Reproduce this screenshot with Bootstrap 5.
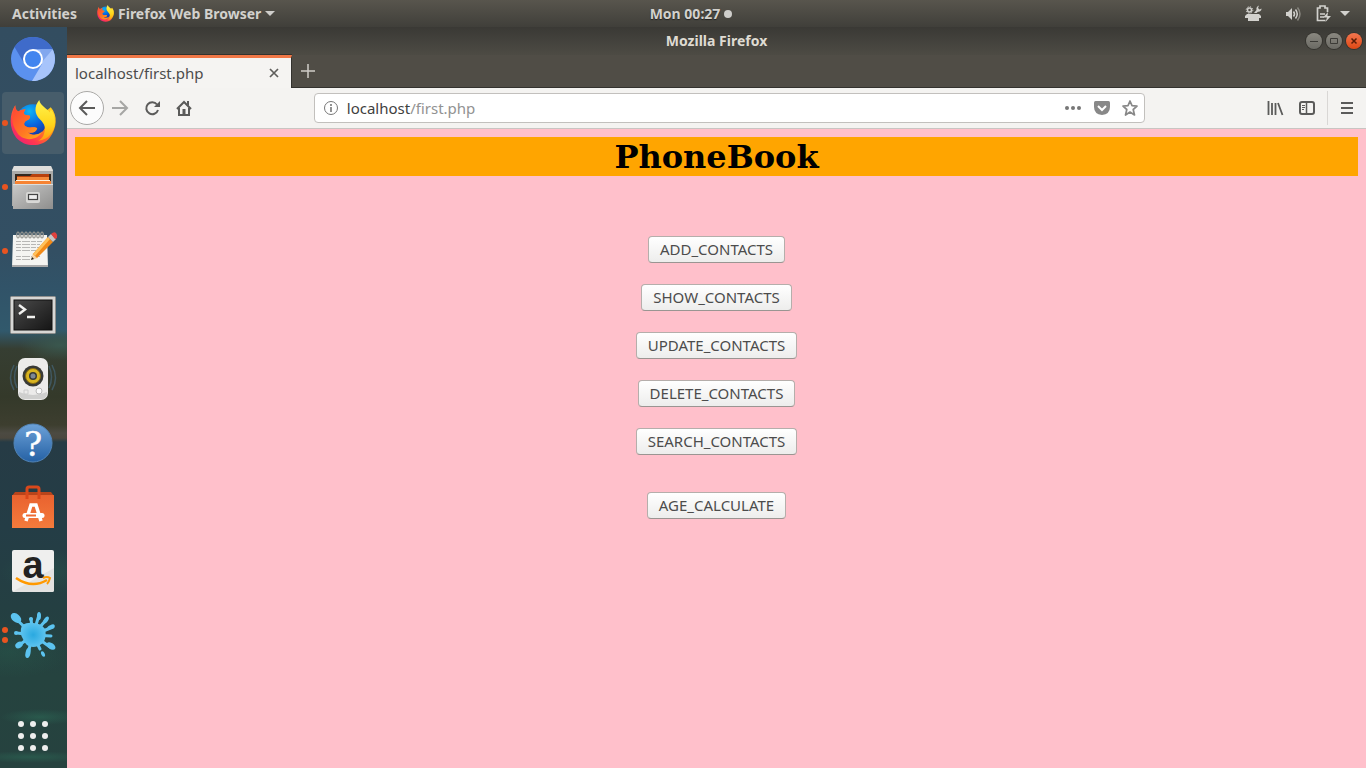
<!DOCTYPE html>
<html lang="en">
<head>
<meta charset="utf-8">
<meta name="viewport" content="width=device-width, initial-scale=1">
<title>PhoneBook</title>
<link href="https://cdn.jsdelivr.net/npm/bootstrap@5.3.0/dist/css/bootstrap.min.css" rel="stylesheet">
<style>
  body { font-family: "Noto Sans", "Open Sans", sans-serif; font-size: 15px; line-height: 20px; background: #3c3b37; color: #4c4c4c; }
  button { font-family: inherit; }
  svg { display: block; flex: none; overflow: visible; }
  .plain { border: 0; background: none; padding: 0; color: inherit; }

  /* desktop top bar */
  .topbar { height: 27px; background: linear-gradient(#58554d, #403f3a); color: #d2d1cd; font-size: 14px; font-weight: 700; text-shadow: 0 1px 1px #222; }
  .side { flex: 1 1 0; }
  .clock-dot { width: 8px; height: 8px; background: #cfcecb; }

  /* launcher */
  .dock { width: 67px; flex: none; padding-right: 1px; background:
      radial-gradient(ellipse 50px 22px at 50px 545px, #28695244, transparent),
      radial-gradient(ellipse 60px 26px at 10px 625px, #2a6b5444, transparent),
      radial-gradient(ellipse 40px 8px at 40px 690px, #2f7a6066, transparent),
      radial-gradient(ellipse 60px 6px at 30px 730px, #2f7a6066, transparent),
      radial-gradient(ellipse 40px 16px at 60px 318px, #3a574e, transparent),
      linear-gradient(#334d60 0, #334f63 225px, #315368 260px, #31596c 304px, #363e32 322px, #34392a 370px, #3d3e2f 398px, #4c4a42 406px, #4b483f 411px, #263b45 415px, #243d46 500px, #243f42 580px, #25433f 650px, #26423f 100%); }
  .dock-item { height: 64px; }
  .dock-tile { width: 62px; height: 62px; border-radius: 4px; place-items: center; }
  .dock-tile.current { background: #475d6b; }
  .dots { left: 2px; }
  .dots i { width: 6px; height: 6px; background: #e95420; }

  /* browser window */
  .titlebar { height: 28px; background: linear-gradient(#3a3935, #4d4b44); color: #dfdbd2; font-size: 14px; font-weight: 700; }
  .winbtn { width: 16px; height: 16px; background: linear-gradient(#8a8880, #6b6a64); color: #3c3b37; box-shadow: 0 0 0 1px #35342f; }
  .winbtn.quit { background: linear-gradient(#f4764f, #dd4814); color: #5a1c06; }
  .tabs { height: 33px; background: #504d46; border-bottom: 1px solid #33322e; }
  .tab { width: 225px; height: 33px; background: #f5f4f2; border-top: 3px solid #f07746; border-right: 1px solid #33322e; box-shadow: 0 -1px #33322e; }
  .toolbar { height: 41px; background: #f4f3f1; border-bottom: 1px solid #c8c5c2; color: #5b5b5a; }
  .nav-tools { width: 19%; gap: 16px; padding-left: 3px; }
  .forward { margin-left: -8px; opacity: .5; }
  .end-tools { width: 17%; }
  .back { width: 34px; height: 34px; border: 1px solid #aaa9a7; background: #fcfcfc; place-items: center; }
  .url { height: 30px; border: 1px solid #c2c0bd; border-radius: 4px; background: #fff; padding: 0 2px 0 8px; }
  .url-field { position: relative; }
  .url-field input { color: transparent; caret-color: #333; border: 0; outline: 0; width: 100%; padding: 0; background: none; }
  .url-text { inset: 0; color: #929292; pointer-events: none; }
  .url-text b { font-weight: 400; color: #3f3f3f; }
  .menu-edge { height: 34px; border-left: 1px solid #d9d7d5; }

  /* page */
  .page { background: #ffc0cb; padding: 8px; }
  .page h1 { font: 700 32px/37px "DejaVu Serif", serif; color: #000; background: #ffa500; margin: 0 0 60px; padding-top: 2px; }
  .gtk { height: 27px; border: 1px solid #b5aeab; border-bottom-color: #9a9592; border-radius: 4px; background: linear-gradient(#fff, #ededec); padding: 0 11px; color: #4c4c4c; font-size: 15px; line-height: 25px; }
  .stack { gap: 21px; }
</style>
</head>
<body class="d-flex flex-column min-vh-100">

<header class="topbar d-flex align-items-center">
  <div class="side d-flex align-items-center ps-2">
    <button class="plain fw-bold ms-1" type="button">Activities</button>
    <button class="plain fw-bold d-flex align-items-center ms-3" type="button">
      <svg class="ms-1 me-1" width="17" height="17" viewBox="0 0 44 44"><use href="#firefox"/></svg>
      Firefox Web Browser
      <svg class="ms-1" width="10" height="6"><path d="M0 0h10L5 5z" fill="#cfcecb"/></svg>
    </button>
  </div>
  <div class="d-flex align-items-center gap-1 ps-3">Mon 00:27 <span class="clock-dot rounded-circle"></span></div>
  <div class="side d-flex align-items-center justify-content-end pe-2">
    <svg class="me-4" width="17" height="17" viewBox="0 0 17 17" fill="#d2d1cd"><circle cx="4.500" cy="5" r="2" fill="none" stroke="#d2d1cd" stroke-width="1.500"/><circle cx="4.500" cy="5" r="3.300" fill="none" stroke="#d2d1cd" stroke-dasharray="1.300 1.290"/><path d="M9 8l2.500-3c-.5-2 .5-4 2.500-4.500L13 3l1.500 1.500 2-1c.2 2-1.500 3.500-3.500 3.200L11.500 8zM2 9h12l2 2v2h-2v3H3v-3H0v-2z"/></svg>
    <svg class="me-3" width="14" height="16" viewBox="0 0 14 16" fill="none" stroke="#d2d1cd" stroke-width="1.500"><path d="M0 6h2l4-4v12l-4-4H0z" fill="#d2d1cd" stroke="none"/><path d="M7.500 5.500q2 2.500 0 5M9.500 3.500q3.500 4.500 0 9"/><path d="M11.500 1.500q5 6.500 0 13" stroke="#88867f"/></svg>
    <svg class="me-2" width="16" height="17" viewBox="0 0 16 17"><path d="M11.500 7V3H9V1H4v2H1.500v12.500h8M4 9h5M4 12h4" fill="none" stroke="#d2d1cd" stroke-width="1.700"/><path d="M12 7l-5 5.500h4L9.500 17l5.500-6h-3.500z" fill="#d2d1cd"/></svg>
    <svg class="me-2" width="10" height="6"><path d="M0 0h10L5 5z" fill="#d2d1cd"/></svg>
  </div>
</header>

<div class="d-flex flex-grow-1">
  <nav class="dock d-flex flex-column justify-content-between" aria-label="Launcher">
    <div>
      <div class="dock-item position-relative d-flex align-items-center justify-content-center">
        <button class="plain dock-tile d-grid" type="button" aria-label="Chromium">
          <svg width="44" height="44" viewBox="0 0 44 44"><circle cx="22" cy="22" r="22" fill="#5b91ef"/><path d="M3.500 10A22 22 0 0 1 40.500 10L42 12.500H22L13 26z" fill="#3f6bca"/><path d="M22 12.500h19.800A22 22 0 0 1 21 44l10-17z" fill="#a7c4fb"/><path d="M29 12.500h12.500L31 25z" fill="#82a7ee"/><circle cx="22" cy="22" r="10" fill="#fff"/><circle cx="22" cy="22" r="8" fill="#4285ef"/></svg>
        </button>
      </div>
      <div class="dock-item position-relative d-flex align-items-center justify-content-center">
        <button class="plain dock-tile current d-grid" type="button" aria-label="Firefox">
          <svg width="46" height="46" viewBox="0 0 44 44">
            <defs>
              <linearGradient id="flame" x1="1" y1="0" x2="0" y2="1"><stop offset="0" stop-color="#ffe226"/><stop offset=".35" stop-color="#ff980e"/><stop offset=".7" stop-color="#ff3750"/><stop offset="1" stop-color="#e31587"/></linearGradient>
              <linearGradient id="fox" x1="0" y1="0" x2="1" y2="1"><stop offset="0" stop-color="#ff4038"/><stop offset=".6" stop-color="#ff7a22"/><stop offset="1" stop-color="#ffb01a"/></linearGradient>
              <linearGradient id="tail" x1="0" y1="0" x2="0" y2="1"><stop offset="0" stop-color="#fff44f"/><stop offset=".6" stop-color="#ffd61b"/><stop offset="1" stop-color="#ff9a12"/></linearGradient>
              <radialGradient id="globe" cx=".4" cy=".2" r=".8"><stop offset="0" stop-color="#0ab5f7"/><stop offset=".5" stop-color="#0a65df"/><stop offset="1" stop-color="#152d91"/></radialGradient>
            </defs>
            <g id="firefox">
              <circle cx="22" cy="21" r="17" fill="url(#globe)"/>
              <path d="M5 5c0 3 1 5 3 6 2-2 5-2 7-2-2 2-2 4-1 5l5 1c1 2-1 4-4 5-3 3-1 5 2 6 4 1 6-1 9 1-1 4-5 5-9 4 7 5 17 1 17-8 0-4-1-7-4-9l9-7c7 8 6 20-1 29-7 9-23 10-32 0C-1 27-1 14 5 5z" fill="url(#flame)"/>
              <path d="M5 5c0 3 1 5 3 6 2-2 5-2 7-2-2 2-2 4-1 5l5 1c1 2-1 4-4 5-3 3-1 5 2 6 4 1 6-1 9 1-1 4-5 5-9 4 5 4 11 2 14-1-5 10-20 10-25 0C1 22 1 13 5 5z" fill="url(#fox)"/>
              <path d="M28 0c-5 6-5 13 1 19 4 4 6 8 3 15-1 2-3 4-5 5 10-1 16-9 16-18 0-5-1-9-4-12l-1 3C36 8 29 6 28 0z" fill="url(#tail)"/>
            </g>
          </svg>
        </button>
        <span class="dots position-absolute"><i class="d-block rounded-circle"></i></span>
      </div>
      <div class="dock-item position-relative d-flex align-items-center justify-content-center">
        <button class="plain dock-tile d-grid" type="button" aria-label="Files">
          <svg width="44" height="44" viewBox="0 0 44 44"><defs><linearGradient id="steel" x2="1" y2="1"><stop stop-color="#c9c9c8"/><stop offset="1" stop-color="#8e8e8d"/></linearGradient></defs><path d="M3 1h37l2 4v36H1V5z" fill="#ababa9"/><path d="M3 1h37l2 5H1z" fill="#dededc"/><path d="M4 9h36v10H4z" fill="#33291f"/><path d="M6 11h13l2-2h17v4H6z" fill="#b8410d"/><path d="M6 12h32v3H6z" fill="#f58a3a"/><path d="M5 15h34v1H5z" fill="#fff1dc"/><path d="M4 16h36v3H4z" fill="#f68332"/><path d="M2 19h40v25H2z" fill="url(#steel)"/><path d="M2 19.500h40" stroke="#dededc"/><rect x="15" y="27" width="14" height="11" rx="2" fill="#d8d8d6"/><rect x="17.500" y="29.500" width="9" height="5" fill="#eee" stroke="#444" stroke-width="1.200"/></svg>
        </button>
        <span class="dots position-absolute"><i class="d-block rounded-circle"></i></span>
      </div>
      <div class="dock-item position-relative d-flex align-items-center justify-content-center">
        <button class="plain dock-tile d-grid" type="button" aria-label="Text Editor">
          <svg width="46" height="44" viewBox="0 0 46 44"><path d="M3 6h34l1 32H2z" fill="#f4f4f1"/><path d="M2 36h36v2H2z" fill="#aaa"/><g stroke="#b7b7b5" stroke-width="1" stroke-dasharray="5 1 8 1"><path d="M6 12.500h26M6 15.500h24M6 18.500h27M6 21.500h20M6 27.500h24M6 30.500h15"/></g><g fill="none" stroke="#9a9a94" stroke-width="1.200"><ellipse cx="8" cy="6" rx="1.300" ry="3"/><ellipse cx="12" cy="6" rx="1.300" ry="3"/><ellipse cx="16" cy="6" rx="1.300" ry="3"/><ellipse cx="20" cy="6" rx="1.300" ry="3"/><ellipse cx="24" cy="6" rx="1.300" ry="3"/><ellipse cx="28" cy="6" rx="1.300" ry="3"/><ellipse cx="32" cy="6" rx="1.300" ry="3"/></g><path d="M21 31l2-7 5 5z" fill="#f4d2a4"/><path d="M21 31l1-3 2 2z" fill="#222"/><path d="M23 25L38 8l5 5-16 16z" fill="#f28a18"/><path d="M23 25L38 8l2 2-15 17z" fill="#ffc15b"/><path d="M38 8l3-3 5 5-3 3z" fill="#c5c5c5"/><path d="M41 5q3-3 5-1t1 5l-2 1z" fill="#e0413d"/></svg>
        </button>
        <span class="dots position-absolute"><i class="d-block rounded-circle"></i></span>
      </div>
      <div class="dock-item position-relative d-flex align-items-center justify-content-center">
        <button class="plain dock-tile d-grid" type="button" aria-label="Terminal">
          <svg width="46" height="38" viewBox="0 0 46 38"><defs><linearGradient id="crt" x2="1" y2="1"><stop stop-color="#4a4a4a"/><stop offset="1" stop-color="#151515"/></linearGradient></defs><rect x=".5" y=".5" width="45" height="37" rx="1" fill="#d7d7d5" stroke="#8f8f8d"/><rect x="4" y="4" width="38" height="30" fill="url(#crt)" stroke="#111"/><path d="M9 9l6 4.500-6 4.500M17 21h8" fill="none" stroke="#f2f2f0" stroke-width="2.400"/></svg>
        </button>
      </div>
      <div class="dock-item position-relative d-flex align-items-center justify-content-center">
        <button class="plain dock-tile d-grid" type="button" aria-label="Rhythmbox">
          <svg width="46" height="44" viewBox="0 0 46 44"><g fill="none" stroke="#476b83" stroke-width="1.500" opacity=".6"><path d="M7 9q-5 11 0 22M39 9q5 11 0 22M4 8q-7 13 0 25M42 8q7 13 0 25"/></g><rect x="8" y="1" width="30" height="42" rx="7" fill="#ecebea"/><path d="M9 35q14 6 28 0v1q0 6-6 6H15q-6 0-6-6z" fill="#cfcfce"/><circle cx="23" cy="19" r="10.500" fill="#393a36"/><circle cx="23" cy="19" r="7.500" fill="#d9b421" stroke="#8a6d10"/><circle cx="23" cy="19" r="4" fill="#393a36"/><circle cx="23" cy="19" r="2.500" fill="#7d8794"/><circle cx="29" cy="34" r="3" fill="#fbfbfb" stroke="#bbb"/><path d="M14 33h4v4h-4z" fill="none" stroke="#ccc"/></svg>
        </button>
      </div>
      <div class="dock-item position-relative d-flex align-items-center justify-content-center">
        <button class="plain dock-tile d-grid" type="button" aria-label="Help">
          <svg width="42" height="42" viewBox="0 0 42 42"><defs><linearGradient id="help" x2="0" y2="1"><stop stop-color="#6ca1d8"/><stop offset="1" stop-color="#2561a4"/></linearGradient></defs><circle cx="21" cy="21" r="19" fill="url(#help)" stroke="#5285b8"/><text x="21" y="34" text-anchor="middle" font-family="DejaVu Serif" font-size="34" fill="#fff" stroke="#fff" stroke-width=".4">?</text></svg>
        </button>
      </div>
      <div class="dock-item position-relative d-flex align-items-center justify-content-center">
        <button class="plain dock-tile d-grid" type="button" aria-label="Ubuntu Software">
          <svg width="44" height="44" viewBox="0 0 44 44"><defs><linearGradient id="bag" x2="0" y2="1"><stop stop-color="#e9622f"/><stop offset="1" stop-color="#f47b3c"/></linearGradient></defs><path d="M1 11l3-4h36l3 4z" fill="#b8441b"/><path d="M1 10h42v33H1z" fill="url(#bag)"/><path d="M16 14V4q0-2 2-2h8q2 0 2 2v10" fill="none" stroke="#d9481b" stroke-width="3"/><path d="M15 36L20 20h5l5 16" fill="none" stroke="#fff" stroke-width="3.500"/><path d="M14 30.500h17" stroke="#fff" stroke-width="5" stroke-linecap="round"/><path d="M15 30.500h10" stroke="#ef6c35" stroke-width="2"/></svg>
        </button>
      </div>
      <div class="dock-item position-relative d-flex align-items-center justify-content-center">
        <button class="plain dock-tile d-grid" type="button" aria-label="Amazon">
          <svg width="42" height="42" viewBox="0 0 42 42"><rect width="42" height="42" rx="2" fill="#efefee"/><path d="M0 42L42 18v22q0 2-2 2z" fill="#e2e2e1"/><text x="21" y="28" text-anchor="middle" font-family="Liberation Sans" font-weight="700" font-size="38" fill="#222">a</text><path d="M4 28q16 11 31 2" fill="none" stroke="#ff9900" stroke-width="2.600"/><path d="M31 28q4-2 7 0-1 4-3 6" fill="none" stroke="#ff9900" stroke-width="2"/></svg>
        </button>
      </div>
      <div class="dock-item position-relative d-flex align-items-center justify-content-center">
        <button class="plain dock-tile d-grid" type="button" aria-label="Paint">
          <svg width="46" height="46" viewBox="0 0 46 46"><defs><radialGradient id="ink"><stop stop-color="#2aa9e0"/><stop offset="1" stop-color="#5cc3ef"/></radialGradient></defs><g stroke="#5cc3ef" stroke-width="3" stroke-linecap="round"><path d="M23 23L5 6M23 23L21 7M23 23L29 3M23 23L36 8M23 23L43 15M23 23l18 1M23 23l17 12M23 23l7 14M23 23l-5 18M23 23L8 34M23 23L7 21"/></g><path d="M12 13q6-3 11-2 8 0 12 6 2 8-2 14-5 4-10 4-8-1-10-8-4-6-1-14z" fill="url(#ink)"/><g fill="#5cc3ef"><ellipse cx="6" cy="6" rx="6" ry="4" transform="rotate(40 6 6)"/><circle cx="21" cy="7" r="2"/><ellipse cx="29" cy="4" rx="2" ry="4"/><ellipse cx="36" cy="8" rx="2" ry="4" transform="rotate(35 36 8)"/><ellipse cx="41" cy="15" rx="4" ry="2" transform="rotate(-25 41 15)"/><ellipse cx="41" cy="34" rx="5" ry="3" transform="rotate(35 41 34)"/><ellipse cx="18" cy="41" rx="2.500" ry="5" transform="rotate(12 18 41)"/><ellipse cx="33" cy="42" rx="1.700" ry="3" transform="rotate(-25 33 42)"/><ellipse cx="9" cy="33" rx="4" ry="3" transform="rotate(-35 9 33)"/><circle cx="6" cy="21" r="2"/></g></svg>
        </button>
        <span class="dots position-absolute d-grid gap-1"><i class="d-block rounded-circle"></i><i class="d-block rounded-circle"></i></span>
      </div>
    </div>
    <div class="dock-item d-flex align-items-center justify-content-center">
      <button class="plain" type="button" aria-label="Show Applications">
        <svg width="30" height="30" fill="#eee"><circle cx="3" cy="3" r="3"/><circle cx="15" cy="3" r="3"/><circle cx="27" cy="3" r="3"/><circle cx="3" cy="15" r="3"/><circle cx="15" cy="15" r="3"/><circle cx="27" cy="15" r="3"/><circle cx="3" cy="27" r="3"/><circle cx="15" cy="27" r="3"/><circle cx="27" cy="27" r="3"/></svg>
      </button>
    </div>
  </nav>

  <div class="flex-grow-1 d-flex flex-column">
    <div class="titlebar d-flex align-items-center">
      <div class="side ps-1"></div>
      <span>Mozilla Firefox</span>
      <div class="side d-flex justify-content-end gap-1 pe-1">
        <button class="plain winbtn rounded-circle" type="button" aria-label="Minimize"><svg width="16" height="16"><path d="M4 8.500h8" stroke="currentColor"/></svg></button>
        <button class="plain winbtn rounded-circle" type="button" aria-label="Maximize"><svg width="16" height="16"><path d="M4.500 5.500h7v5h-7z" fill="none" stroke="currentColor"/></svg></button>
        <button class="plain winbtn quit rounded-circle" type="button" aria-label="Close"><svg width="16" height="16"><path d="M5.500 5.500l5 5M10.500 5.500l-5 5" stroke="currentColor" stroke-width="1.500"/></svg></button>
      </div>
    </div>

    <div class="tabs d-flex">
      <div class="tab d-flex align-items-center justify-content-between ps-2 pe-2">
        <span>localhost/first.php</span>
        <button class="plain me-1" type="button" aria-label="Close tab"><svg width="10" height="10"><path d="M1 1l8 8M9 1L1 9" stroke="#5f5e5c" stroke-width="1.700"/></svg></button>
      </div>
      <button class="plain ps-2" type="button" aria-label="New tab"><svg width="16" height="14"><path d="M8 0v14M1 7h14" stroke="#cfcdc8" stroke-width="1.500"/></svg></button>
    </div>

    <div class="toolbar d-flex align-items-center">
      <div class="nav-tools d-flex align-items-center">
        <button class="plain back rounded-circle d-grid" type="button" aria-label="Back"><svg width="16" height="16"><path d="M16 8H1M8 1L1 8l7 7" fill="none" stroke="currentColor" stroke-width="2"/></svg></button>
        <button class="plain forward" type="button" aria-label="Forward"><svg width="16" height="16"><path d="M0 8h15M8 1l7 7-7 7" fill="none" stroke="currentColor" stroke-width="2"/></svg></button>
        <button class="plain" type="button" aria-label="Reload"><svg width="16" height="16"><path d="M13 4.500A6 6 0 1 0 14 10" fill="none" stroke="currentColor" stroke-width="2"/><path d="M16 1v6h-6z" fill="currentColor"/></svg></button>
        <button class="plain" type="button" aria-label="Home"><svg width="16" height="16"><path d="M1 9l7-7 7 7M3 8v7h10V8" fill="none" stroke="currentColor" stroke-width="2"/><path d="M6.500 9h3v6h-3z" fill="currentColor"/><path d="M11 1h2v5l-2-2z" fill="currentColor"/></svg></button>
      </div>
      <div class="url flex-grow-1 d-flex align-items-center">
        <svg width="16" height="16"><circle cx="8" cy="8" r="6.500" fill="none" stroke="#777"/><path d="M8 7v5M8 4v2" stroke="#777" stroke-width="1.600"/></svg>
        <div class="url-field flex-grow-1 ms-2 d-flex">
          <input type="text" aria-label="Address" value="localhost/first.php">
          <span class="url-text position-absolute"><b>localhost</b>/first.php</span>
        </div>
        <button class="plain me-2" type="button" aria-label="Page actions"><svg width="18" height="16" fill="#777"><circle cx="3" cy="8" r="2"/><circle cx="9" cy="8" r="2"/><circle cx="15" cy="8" r="2"/></svg></button>
        <button class="plain ms-1 me-2" type="button" aria-label="Save to Pocket"><svg width="16" height="16"><path d="M1.500 1h13q1.500 0 1.500 1.500V7q0 7-8 8Q0 14 0 7V2.500Q0 1 1.500 1z" fill="#888"/><path d="M4 6l4 4 4-4" fill="none" stroke="#fff" stroke-width="2"/></svg></button>
        <button class="plain ms-1 me-1" type="button" aria-label="Bookmark"><svg width="16" height="16"><path d="M8 1l2 4.700 5 .4-3.800 3.400L12.500 15 8 12l-4.500 3 1.300-5.500L1 6.100l5-.4z" fill="none" stroke="#888" stroke-width="1.700" stroke-linejoin="round"/></svg></button>
      </div>
      <div class="end-tools d-flex align-items-center justify-content-end">
        <button class="plain me-3" type="button" aria-label="Library"><svg width="16" height="16"><path d="M1.500 1v14M5 3v12M8.500 3v12M11 3l4.500 12" stroke="currentColor" stroke-width="1.800"/></svg></button>
        <button class="plain me-2 pe-1" type="button" aria-label="Sidebars"><svg width="16" height="16" fill="none" stroke="currentColor"><rect x="1" y="2" width="14" height="12" rx="2" stroke-width="2"/><path d="M7.500 2v12" stroke-width="1.500"/><path d="M3 5.500h3M3 7.500h3M3 9.500h2"/></svg></button>
        <div class="menu-edge d-flex align-items-center ps-2 pe-2"><button class="plain ms-1 me-1" type="button" aria-label="Menu"><svg width="14" height="14"><path d="M1 2h12M1 7h12M1 12h12" stroke="currentColor" stroke-width="2"/></svg></button></div>
      </div>
    </div>

    <main class="page flex-grow-1">
      <h1 class="text-center">PhoneBook</h1>
      <div class="stack d-flex flex-column align-items-center">
        <button class="gtk" type="button">ADD_CONTACTS</button>
        <button class="gtk" type="button">SHOW_CONTACTS</button>
        <button class="gtk" type="button">UPDATE_CONTACTS</button>
        <button class="gtk" type="button">DELETE_CONTACTS</button>
        <button class="gtk" type="button">SEARCH_CONTACTS</button>
        <button class="gtk mt-3" type="button">AGE_CALCULATE</button>
      </div>
    </main>
  </div>
</div>
<script src="https://cdn.jsdelivr.net/npm/bootstrap@5.3.0/dist/js/bootstrap.bundle.min.js"></script>
</body>
</html>
